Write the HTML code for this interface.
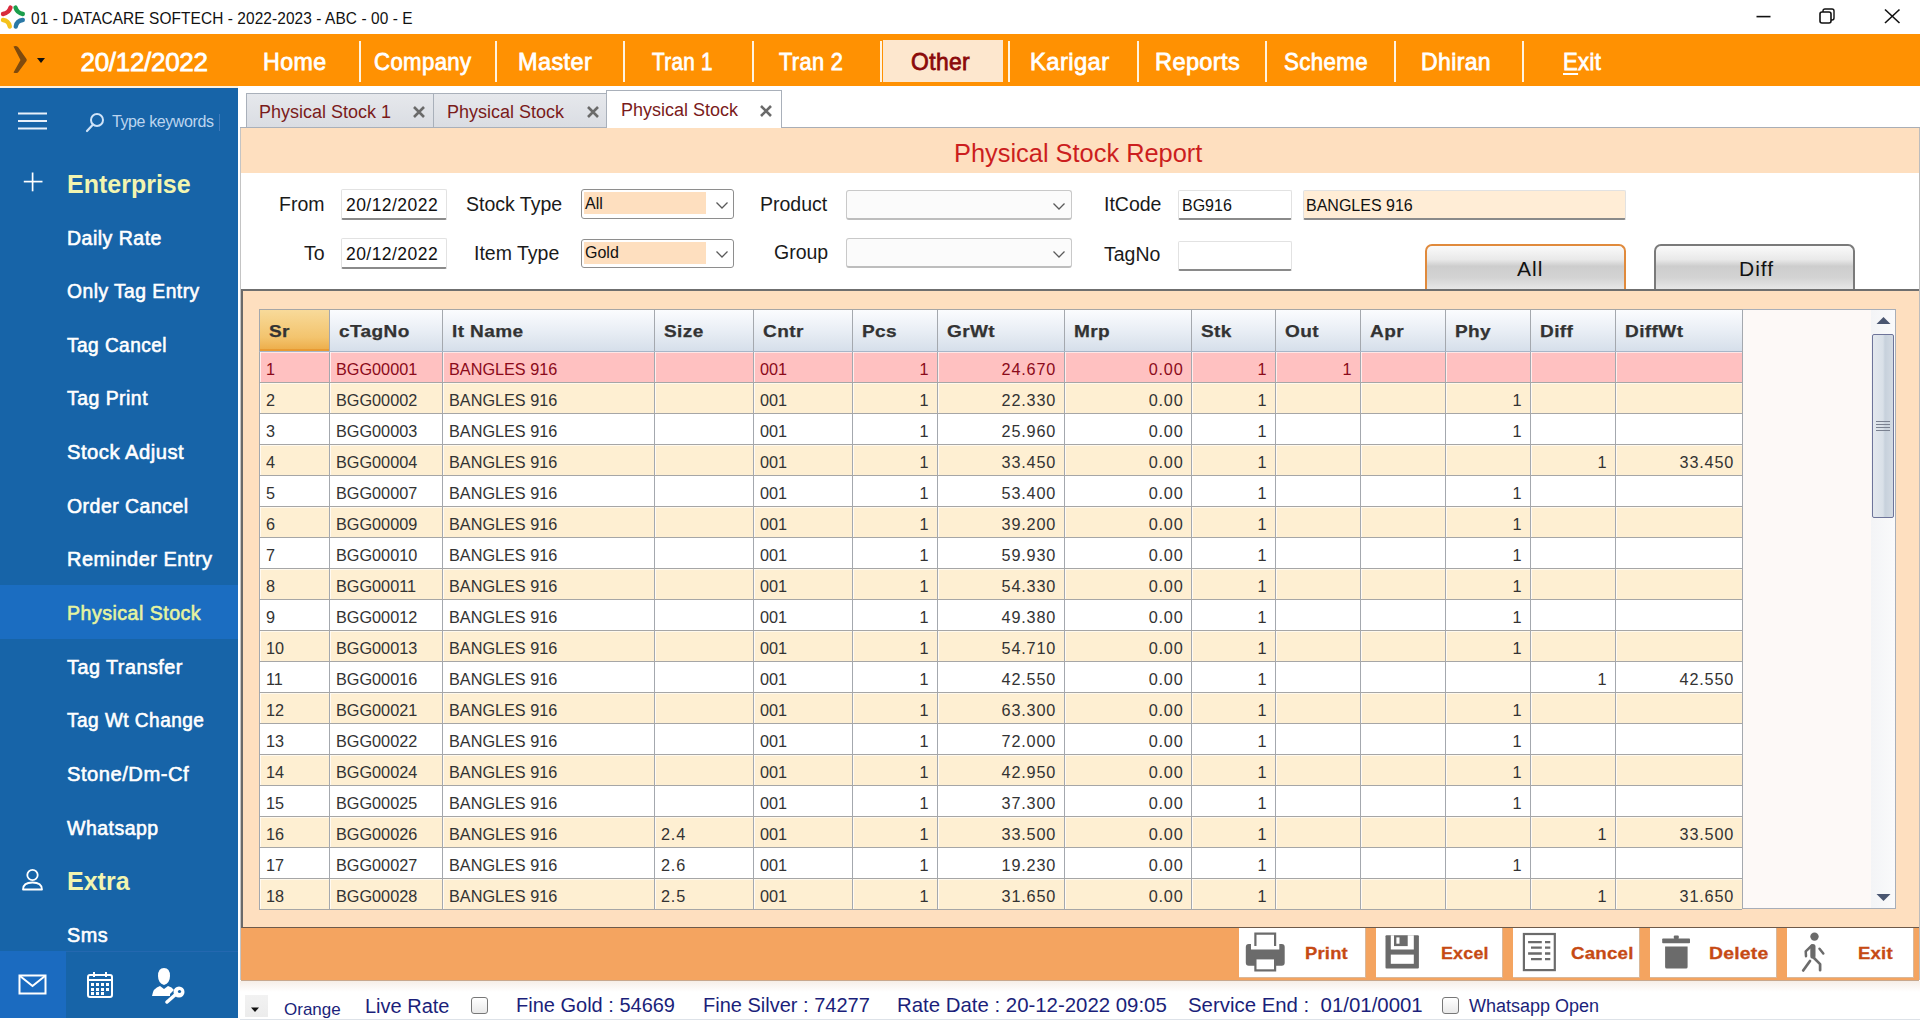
<!DOCTYPE html>
<html><head><meta charset="utf-8">
<style>
*{margin:0;padding:0;box-sizing:border-box}
html,body{width:1920px;height:1020px;overflow:hidden;background:#fff;font-family:"Liberation Sans",sans-serif}
.a{position:absolute}
/* title bar */
#title{position:absolute;left:31px;top:9px;font-size:17px;letter-spacing:0.1px;transform:scaleX(0.907);transform-origin:0 0;color:#111;white-space:nowrap}
/* menu */
#menubar{position:absolute;left:0;top:34px;width:1920px;height:52px;background:#FF9102}
.mi{position:absolute;top:52px;font-weight:normal;-webkit-text-stroke:0.8px currentColor;font-size:24px;letter-spacing:0.4px;transform-origin:0 0;color:#fff;line-height:20px;white-space:nowrap}
.mi u{text-decoration:underline;text-underline-offset:3px;text-decoration-thickness:2px}
.msel{color:#8B0A0A}
#oth{position:absolute;left:883px;top:40px;width:120px;height:42px;background:#FDE7CE}
.msep{position:absolute;top:41px;width:2px;height:41px;background:#FFF3E0}
#mdate{position:absolute;left:80.5px;top:52px;font-size:26px;font-weight:normal;-webkit-text-stroke:0.8px #fff;color:#fff;letter-spacing:-0.3px;line-height:20px}
/* sidebar */
#side{position:absolute;left:0;top:88px;width:238px;height:930px;background:#1764A8}
.si{position:absolute;left:0;width:238px;height:53.5px}
.si span{position:absolute;left:67px;top:21px;transform-origin:0 0;font-weight:normal;-webkit-text-stroke:0.6px currentColor;font-size:20px;letter-spacing:0.5px;color:#fff;line-height:14px;white-space:nowrap}
.si.sel{background:#1B6DC1}
.si.sel span{color:#E6F3A0}
.sh{position:absolute;left:67px;font-weight:bold;font-size:25px;color:#F2F5B0;line-height:18px;white-space:nowrap}
/* tabs */
.tab{position:absolute;top:93px;height:35px;border:1px solid #A9B0BA;background:linear-gradient(#E6E8EC,#DADDE3)}
.tab span{position:absolute;top:9px;font-size:18px;color:#7A1B1B;white-space:nowrap;line-height:18px}
.tab i{position:absolute;top:10px;font-style:normal}
.tab.act{top:90px;height:38px;background:#fff;border-bottom:none}
/* content */
#content{position:absolute;left:240px;top:128px;width:1680px;height:852px;background:#FEDFBF;border-left:1px solid #C4C4C4;border-right:1px solid #BDBDBD}
#panel{position:absolute;left:241px;top:289px;width:1678px;height:639px;border-left:2px solid #6a6a6a;border-top:2px solid #6f6f6f;border-bottom:1px solid #6f5a4a}
#rtitle{position:absolute;left:954px;top:141px;font-size:25.4px;color:#CC1E1E;line-height:24px;white-space:nowrap}
#form{position:absolute;left:241px;top:173px;width:1678px;height:117px;background:#fff}
.lbl{position:absolute;font-size:19.5px;color:#1a1a1a;white-space:nowrap;line-height:16px}
.inp{position:absolute;background:#fff;border:1px solid #E2E2E2;border-bottom:2px solid #8a8a8a;border-radius:2px}
.inp span{position:absolute;left:4px;top:8px;font-size:16px;color:#111;white-space:nowrap;line-height:14px}
.cmb{position:absolute;background:#fff;border:1.5px solid #8E8E8E;border-radius:3px}
.cmb2{position:absolute;background:#FBFBFB;border:1px solid #C9C9C9;border-bottom:2px solid #BDBDBD;border-radius:3px}
.chev{position:absolute;width:8px;height:8px;border-right:1.5px solid #555;border-bottom:1.5px solid #555;transform:rotate(45deg)}
.btn{position:absolute;top:244px;height:47px;border-radius:7px 7px 0 0;background:linear-gradient(#FAFAFA 0%,#E9E9E9 30%,#CDCDCD 45%,#D3D3D3 70%,#EAEAEA 100%)}
.btn span{position:absolute;top:16px;font-size:21px;color:#111;line-height:16px}
#panelline{position:absolute;left:242px;top:289px;width:1676px;height:2px;background:#6f6f6f}
/* grid */
#grid{position:absolute;left:259px;top:309px;width:1637px;height:600px;background:#FDF9F7;border:1px solid #A8AEB8;border-left:none}
.hd{position:absolute;top:310px;height:41px;background:linear-gradient(#FBFCFE,#E9EEF5 50%,#D6DFEA)}
.hd span{position:absolute;left:9px;top:16px;font-weight:bold;-webkit-text-stroke:0.25px #333;font-size:17px;letter-spacing:0.35px;transform:scaleX(1.12);transform-origin:0 0;color:#333;line-height:12px;white-space:nowrap}
.hd.sr{background:linear-gradient(#F8DA9A,#F3C46E 70%,#EDAF4C);border-bottom:2px solid #E89A32}
.row{position:absolute;left:259px;width:1483px;height:31px}
.r1{background:#FFC1C1;color:#8B0A1A}
.ra{background:#FEEFD2;color:#333}
.rb{background:#fff;color:#333}
.c{position:absolute;top:5px;height:26px;padding:0 9px 0 6px;font-size:17px;line-height:28px;white-space:nowrap}
.dec{letter-spacing:0.85px;padding-right:8px}
.c span{display:inline-block;transform:scaleX(0.955);transform-origin:0 50%}
.c.ar span{transform-origin:100% 50%}
.ar{text-align:right}
.vl{position:absolute;top:309px;width:1px;height:600px;background:#A4A8AE}
.hl{position:absolute;left:259px;width:1483px;height:1px;background:#A6A6A6}
/* scrollbar */
#sbar{position:absolute;left:1871px;top:310px;width:24px;height:598px;background:linear-gradient(90deg,#F3F4F6,#FAFAFB)}
#sthumb{position:absolute;left:1872px;top:334px;width:22px;height:184px;border:1.5px solid #6E7499;border-radius:2px;background:linear-gradient(90deg,#E3E8EE,#D9E0E8 50%,#C7D1DC 60%,#D3DAE3)}
/* bottom bar */
#bbar{position:absolute;left:241px;top:928px;width:1678px;height:53px;background:#F4A460;border-bottom:1px solid #C8A88E}
.bb{position:absolute;top:928px;height:50px;background:#fff;border-right:1px solid #d9b89a;border-bottom:1px solid #d9b89a}
.bb span{position:absolute;top:19px;font-weight:bold;font-size:17px;letter-spacing:0.2px;-webkit-text-stroke:0.3px currentColor;transform-origin:0 0;color:#C64A14;line-height:13px;white-space:nowrap}
/* status */
#status{position:absolute;left:240px;top:981px;width:1680px;height:39px;background:linear-gradient(#F6EEE8,#FFFFFF 28%)}
.st{position:absolute;font-size:20px;color:#1B1F7A;white-space:nowrap;line-height:15px}
.cb{position:absolute;width:17px;height:17px;border:1.5px solid #777;border-radius:3px;background:linear-gradient(#fff,#e9e9e9)}
</style></head><body>

<!-- title bar -->
<svg class="a" style="left:0;top:0" width="28" height="32" viewBox="0 0 28 32">
  <path d="M3 14 Q9 13 10.5 7.5" stroke="#D92B3C" stroke-width="4.4" fill="none" stroke-linecap="round"/>
  <path d="M15.5 7.5 Q17 13 22.8 14" stroke="#1C9E4C" stroke-width="4.4" fill="none" stroke-linecap="round"/>
  <path d="M3 20 Q8.5 20.5 9.8 26.5" stroke="#F4C21C" stroke-width="4.4" fill="none" stroke-linecap="round"/>
  <path d="M15.8 26.5 Q16.8 20.5 22.8 20" stroke="#2A78A6" stroke-width="4.4" fill="none" stroke-linecap="round"/>
</svg>
<div id="title">01 - DATACARE SOFTECH - 2022-2023 - ABC - 00 - E</div>
<svg class="a" style="left:1750px;top:8px" width="160" height="20" viewBox="0 0 160 20">
  <line x1="6.5" y1="8.6" x2="20.5" y2="8.6" stroke="#111" stroke-width="1.6"/>
  <rect x="70" y="4" width="11" height="11" rx="2" stroke="#111" stroke-width="1.6" fill="none"/>
  <path d="M73 4 V3 Q73 1 75 1 H82 Q84 1 84 3 V10 Q84 12 82 12 H81" stroke="#111" stroke-width="1.4" fill="none"/>
  <line x1="135" y1="1.5" x2="149.5" y2="15" stroke="#111" stroke-width="1.6"/>
  <line x1="149.5" y1="1.5" x2="135" y2="15" stroke="#111" stroke-width="1.6"/>
</svg>

<!-- menu bar -->
<div id="menubar"></div>
<div class="a" style="left:0;top:86px;width:238px;height:2px;background:#FDF1DF"></div>
<svg class="a" style="left:10px;top:44px" width="40" height="34" viewBox="0 0 40 34">
  <path d="M3.5 2.5 Q6 1.5 8 3 L16.5 15 Q17 16 16.5 17 L8 28.5 Q6 29.5 3.5 28.5 L10.5 16 Z" fill="#7E4A0E"/>
  <path d="M27 14 L35 14 L31 19 Z" fill="#111"/>
</svg>
<div id="mdate">20/12/2022</div>
<div id="oth"></div>
<div class="msep" style="left:359px"></div>
<div class="msep" style="left:495px"></div>
<div class="msep" style="left:623px"></div>
<div class="msep" style="left:752px"></div>
<div class="msep" style="left:880px"></div>
<div class="msep" style="left:1008px"></div>
<div class="msep" style="left:1137px"></div>
<div class="msep" style="left:1265px"></div>
<div class="msep" style="left:1394px"></div>
<div class="msep" style="left:1522px"></div>
<div class="mi" style="left:263px;transform:scaleX(0.967)">Home</div>
<div class="mi" style="left:374px;transform:scaleX(0.924)">Company</div>
<div class="mi" style="left:518px;transform:scaleX(0.979)">Master</div>
<div class="mi" style="left:652px;transform:scaleX(0.859)">Tran 1</div>
<div class="mi" style="left:779px;transform:scaleX(0.908)">Tran 2</div>
<div class="mi msel" style="left:911px;transform:scaleX(0.952)">Other</div>
<div class="mi" style="left:1030px;transform:scaleX(0.991)">Karigar</div>
<div class="mi" style="left:1155px;transform:scaleX(0.981)">Reports</div>
<div class="mi" style="left:1284px;transform:scaleX(0.928)">Scheme</div>
<div class="mi" style="left:1421px;transform:scaleX(0.958)">Dhiran</div>
<div class="mi" style="left:1563px;transform:scaleX(0.919)"><u>E</u>xit</div>

<!-- sidebar -->
<div id="side"></div>
<svg class="a" style="left:16px;top:111px" width="34" height="20" viewBox="0 0 34 20">
  <line x1="2" y1="2.5" x2="31" y2="2.5" stroke="#E8F0FA" stroke-width="2"/>
  <line x1="2" y1="10" x2="31" y2="10" stroke="#E8F0FA" stroke-width="2"/>
  <line x1="2" y1="17.5" x2="31" y2="17.5" stroke="#E8F0FA" stroke-width="2"/>
</svg>
<svg class="a" style="left:84px;top:110px" width="22" height="24" viewBox="0 0 22 24">
  <circle cx="13" cy="10" r="6" stroke="#CFE3F8" stroke-width="2" fill="none"/>
  <line x1="9" y1="14.5" x2="3" y2="21" stroke="#CFE3F8" stroke-width="2.2" stroke-linecap="round"/>
</svg>
<div class="a" style="left:112px;top:115px;font-size:16px;color:#BCD5EF;letter-spacing:-0.4px;line-height:14px;white-space:nowrap">Type keywords</div>
<div class="a" style="left:219px;top:114px;width:1px;height:17px;background:#3f7bbd"></div>
<svg class="a" style="left:23px;top:172px" width="20" height="20" viewBox="0 0 20 20">
  <line x1="9.6" y1="0.5" x2="9.6" y2="19.3" stroke="#fff" stroke-width="1.7"/>
  <line x1="0.8" y1="9.6" x2="19.5" y2="9.6" stroke="#fff" stroke-width="1.7"/>
</svg>
<div class="sh" style="top:175px">Enterprise</div>
<div class="si" style="top:209.5px"><span style="transform:scaleX(0.976)">Daily Rate</span></div>
<div class="si" style="top:263px"><span style="transform:scaleX(0.963)">Only Tag Entry</span></div>
<div class="si" style="top:316.5px"><span style="transform:scaleX(0.952)">Tag Cancel</span></div>
<div class="si" style="top:370px"><span style="transform:scaleX(0.971)">Tag Print</span></div>
<div class="si" style="top:424px"><span style="transform:scaleX(1.009)">Stock Adjust</span></div>
<div class="si" style="top:477.5px"><span style="transform:scaleX(0.973)">Order Cancel</span></div>
<div class="si" style="top:531px"><span style="transform:scaleX(0.997)">Reminder Entry</span></div>
<div class="si sel" style="top:585px"><span style="transform:scaleX(0.978)">Physical Stock</span></div>
<div class="si" style="top:638.5px"><span style="transform:scaleX(0.989)">Tag Transfer</span></div>
<div class="si" style="top:692px"><span style="transform:scaleX(0.952)">Tag Wt Change</span></div>
<div class="si" style="top:746px"><span style="transform:scaleX(1.009)">Stone/Dm-Cf</span></div>
<div class="si" style="top:799.5px"><span style="transform:scaleX(0.975)">Whatsapp</span></div>
<div class="si" style="top:907px"><span style="transform:scaleX(0.99)">Sms</span></div>
<svg class="a" style="left:20px;top:868px" width="26" height="24" viewBox="0 0 26 24">
  <circle cx="12.5" cy="7" r="5.2" stroke="#fff" stroke-width="1.8" fill="none"/>
  <path d="M3 21.5 Q3 14.5 12.5 14.5 Q22 14.5 22 21.5 Z" stroke="#fff" stroke-width="1.8" fill="none" stroke-linejoin="round"/>
</svg>
<div class="sh" style="top:872px">Extra</div>
<div class="a" style="left:0;top:951px;width:238px;height:67px;background:#1764A8;border-top:1px solid #2468B0"></div>
<div class="a" style="left:0;top:951px;width:66px;height:67px;background:#1B6BC0"></div>
<svg class="a" style="left:18px;top:974px" width="30" height="22" viewBox="0 0 30 22">
  <rect x="1.5" y="1.5" width="26" height="18" stroke="#fff" stroke-width="2" fill="none"/>
  <path d="M2 2 L14.5 12 L27 2" stroke="#fff" stroke-width="2" fill="none"/>
</svg>
<svg class="a" style="left:86px;top:971px" width="28" height="28" viewBox="0 0 28 28">
  <rect x="2" y="4" width="24" height="22" rx="2" stroke="#fff" stroke-width="2" fill="none"/>
  <line x1="2" y1="9" x2="26" y2="9" stroke="#fff" stroke-width="2"/>
  <line x1="8" y1="1" x2="8" y2="6" stroke="#fff" stroke-width="2"/>
  <line x1="20" y1="1" x2="20" y2="6" stroke="#fff" stroke-width="2"/>
  <g fill="#fff">
   <rect x="5" y="12" width="3" height="3"/><rect x="10" y="12" width="3" height="3"/><rect x="15" y="12" width="3" height="3"/><rect x="20" y="12" width="3" height="3"/>
   <rect x="5" y="17" width="3" height="3"/><rect x="10" y="17" width="3" height="3"/><rect x="15" y="17" width="3" height="3"/><rect x="20" y="17" width="3" height="3"/>
   <rect x="5" y="21" width="3" height="3"/><rect x="10" y="21" width="3" height="3"/><rect x="15" y="21" width="3" height="3"/>
  </g>
</svg>
<svg class="a" style="left:150px;top:966px" width="38" height="38" viewBox="0 0 38 38">
  <path d="M14 2 Q8 2 8 10 Q8 17 14 19 Q20 17 20 10 Q20 2 14 2 Z" fill="#fff"/>
  <path d="M2 30 Q3 22 10 20 L14 23 L18 20 Q22 21 24 24 L20 28 L20 30 Z" fill="#fff"/>
  <circle cx="29" cy="26" r="5.5" fill="#fff"/>
  <circle cx="29.5" cy="25.5" r="1.6" fill="#1764A8"/>
  <path d="M25 29 L17 36" stroke="#fff" stroke-width="3.5" stroke-linecap="round"/>
</svg>

<!-- content -->
<div id="content"></div>
<div class="a" style="left:240px;top:127px;width:367px;height:1px;background:#A9AEB6"></div><div class="a" style="left:781px;top:127px;width:1139px;height:1px;background:#A9AEB6"></div>
<!-- tabs -->
<div class="tab" style="left:246px;width:188px"><span style="left:12px">Physical Stock 1</span><i style="left:165px"><svg width="14" height="12" viewBox="0 0 14 12"><path d="M2 1 L12 11 M12 1 L2 11" stroke="#6a6a6a" stroke-width="2.6"/></svg></i></div>
<div class="tab" style="left:433px;width:174px"><span style="left:13px">Physical Stock</span><i style="left:152px"><svg width="14" height="12" viewBox="0 0 14 12"><path d="M2 1 L12 11 M12 1 L2 11" stroke="#6a6a6a" stroke-width="2.6"/></svg></i></div>
<div class="tab act" style="left:606px;width:176px"><span style="left:14px;top:10px">Physical Stock</span><i style="left:152px;top:12px"><svg width="14" height="12" viewBox="0 0 14 12"><path d="M2 1 L12 11 M12 1 L2 11" stroke="#6a6a6a" stroke-width="2.6"/></svg></i></div>

<div id="rtitle">Physical Stock Report</div>
<div id="form"></div>

<div class="lbl" style="left:279px;top:196px">From</div>
<div class="lbl" style="left:304px;top:245px">To</div>
<div class="inp" style="left:341px;top:189px;width:106px;height:31px"><span style="letter-spacing:0.45px;font-size:17.5px;top:8px">20/12/2022</span></div>
<div class="inp" style="left:341px;top:238px;width:106px;height:31px"><span style="letter-spacing:0.45px;font-size:17.5px;top:8px">20/12/2022</span></div>

<div class="lbl" style="left:466px;top:196px">Stock Type</div>
<div class="lbl" style="left:474px;top:245px">Item Type</div>
<div class="cmb" style="left:581px;top:189px;width:153px;height:30px"><div class="a" style="left:2px;top:2px;width:122px;height:22px;background:#FEDFBF"></div><span class="a" style="left:3px;top:7px;font-size:16px;line-height:13px;color:#111">All</span></div>
<div class="cmb" style="left:581px;top:239px;width:153px;height:29px"><div class="a" style="left:2px;top:2px;width:122px;height:22px;background:#FEDFBF"></div><span class="a" style="left:3px;top:6px;font-size:16px;line-height:13px;color:#111">Gold</span></div>

<div class="lbl" style="left:760px;top:196px">Product</div>
<div class="lbl" style="left:774px;top:244px">Group</div>
<div class="cmb2" style="left:846px;top:190px;width:226px;height:30px"></div>
<div class="cmb2" style="left:846px;top:238px;width:226px;height:30px"></div>

<svg class="a" style="left:714.5px;top:200.5px" width="14" height="9" viewBox="0 0 14 9"><path d="M1.5 1.5 L7 7 L12.5 1.5" stroke="#5a5a5a" stroke-width="1.3" fill="none"/></svg>
<svg class="a" style="left:714.5px;top:249.5px" width="14" height="9" viewBox="0 0 14 9"><path d="M1.5 1.5 L7 7 L12.5 1.5" stroke="#5a5a5a" stroke-width="1.3" fill="none"/></svg>
<svg class="a" style="left:1052px;top:202px" width="14" height="9" viewBox="0 0 14 9"><path d="M1.5 1.5 L7 7 L12.5 1.5" stroke="#5a5a5a" stroke-width="1.3" fill="none"/></svg>
<svg class="a" style="left:1052px;top:249.5px" width="14" height="9" viewBox="0 0 14 9"><path d="M1.5 1.5 L7 7 L12.5 1.5" stroke="#5a5a5a" stroke-width="1.3" fill="none"/></svg>
<div class="lbl" style="left:1104px;top:196px">ItCode</div>
<div class="lbl" style="left:1104px;top:246px">TagNo</div>
<div class="inp" style="left:1178px;top:190px;width:114px;height:30px"><span style="top:8px;left:3px">BG916</span></div>
<div class="inp" style="left:1178px;top:241px;width:114px;height:30px"></div>
<div class="inp" style="left:1303px;top:190px;width:323px;height:30px;background:#FFEDD6"><span style="top:8px;left:2px">BANGLES 916</span></div>

<div class="btn" style="left:1425px;width:201px;border:2px solid #E08A3C;border-bottom:none"><span style="left:90px;top:15px;letter-spacing:1px">All</span></div>
<div class="btn" style="left:1654px;width:201px;border:2px solid #7a7a7a;border-bottom:none"><span style="left:83px;top:15px;letter-spacing:1px">Diff</span></div>
<div id="panel"></div>

<!-- grid -->
<div id="grid"></div>
<div class="hd sr" style="left:260px;width:69px"><span>Sr</span></div>
<div class="hd" style="left:330px;width:112px"><span>cTagNo</span></div>
<div class="hd" style="left:443px;width:211px"><span>It Name</span></div>
<div class="hd" style="left:655px;width:98px"><span>Size</span></div>
<div class="hd" style="left:754px;width:98px"><span>Cntr</span></div>
<div class="hd" style="left:853px;width:84px"><span>Pcs</span></div>
<div class="hd" style="left:938px;width:126px"><span>GrWt</span></div>
<div class="hd" style="left:1065px;width:126px"><span>Mrp</span></div>
<div class="hd" style="left:1192px;width:83px"><span>Stk</span></div>
<div class="hd" style="left:1276px;width:84px"><span>Out</span></div>
<div class="hd" style="left:1361px;width:84px"><span>Apr</span></div>
<div class="hd" style="left:1446px;width:84px"><span>Phy</span></div>
<div class="hd" style="left:1531px;width:84px"><span>Diff</span></div>
<div class="hd" style="left:1616px;width:126px"><span>DiffWt</span></div>
<div class="row r1" style="top:351px">
<div class="c" style="left:1px;width:69px"><span>1</span></div>
<div class="c" style="left:71px;width:112px"><span>BGG00001</span></div>
<div class="c" style="left:184px;width:211px"><span>BANGLES 916</span></div>
<div class="c" style="left:396px;width:98px"></div>
<div class="c" style="left:495px;width:98px"><span>001</span></div>
<div class="c ar" style="left:594px;width:84px"><span>1</span></div>
<div class="c ar dec" style="left:679px;width:126px"><span>24.670</span></div>
<div class="c ar dec" style="left:806px;width:126px"><span>0.00</span></div>
<div class="c ar" style="left:933px;width:83px"><span>1</span></div>
<div class="c ar" style="left:1017px;width:84px"><span>1</span></div>
<div class="c ar" style="left:1102px;width:84px"></div>
<div class="c ar" style="left:1187px;width:84px"></div>
<div class="c ar" style="left:1272px;width:84px"></div>
<div class="c ar" style="left:1357px;width:126px"></div>
</div>
<div class="row ra" style="top:382px">
<div class="c" style="left:1px;width:69px"><span>2</span></div>
<div class="c" style="left:71px;width:112px"><span>BGG00002</span></div>
<div class="c" style="left:184px;width:211px"><span>BANGLES 916</span></div>
<div class="c" style="left:396px;width:98px"></div>
<div class="c" style="left:495px;width:98px"><span>001</span></div>
<div class="c ar" style="left:594px;width:84px"><span>1</span></div>
<div class="c ar dec" style="left:679px;width:126px"><span>22.330</span></div>
<div class="c ar dec" style="left:806px;width:126px"><span>0.00</span></div>
<div class="c ar" style="left:933px;width:83px"><span>1</span></div>
<div class="c ar" style="left:1017px;width:84px"></div>
<div class="c ar" style="left:1102px;width:84px"></div>
<div class="c ar" style="left:1187px;width:84px"><span>1</span></div>
<div class="c ar" style="left:1272px;width:84px"></div>
<div class="c ar" style="left:1357px;width:126px"></div>
</div>
<div class="row rb" style="top:413px">
<div class="c" style="left:1px;width:69px"><span>3</span></div>
<div class="c" style="left:71px;width:112px"><span>BGG00003</span></div>
<div class="c" style="left:184px;width:211px"><span>BANGLES 916</span></div>
<div class="c" style="left:396px;width:98px"></div>
<div class="c" style="left:495px;width:98px"><span>001</span></div>
<div class="c ar" style="left:594px;width:84px"><span>1</span></div>
<div class="c ar dec" style="left:679px;width:126px"><span>25.960</span></div>
<div class="c ar dec" style="left:806px;width:126px"><span>0.00</span></div>
<div class="c ar" style="left:933px;width:83px"><span>1</span></div>
<div class="c ar" style="left:1017px;width:84px"></div>
<div class="c ar" style="left:1102px;width:84px"></div>
<div class="c ar" style="left:1187px;width:84px"><span>1</span></div>
<div class="c ar" style="left:1272px;width:84px"></div>
<div class="c ar" style="left:1357px;width:126px"></div>
</div>
<div class="row ra" style="top:444px">
<div class="c" style="left:1px;width:69px"><span>4</span></div>
<div class="c" style="left:71px;width:112px"><span>BGG00004</span></div>
<div class="c" style="left:184px;width:211px"><span>BANGLES 916</span></div>
<div class="c" style="left:396px;width:98px"></div>
<div class="c" style="left:495px;width:98px"><span>001</span></div>
<div class="c ar" style="left:594px;width:84px"><span>1</span></div>
<div class="c ar dec" style="left:679px;width:126px"><span>33.450</span></div>
<div class="c ar dec" style="left:806px;width:126px"><span>0.00</span></div>
<div class="c ar" style="left:933px;width:83px"><span>1</span></div>
<div class="c ar" style="left:1017px;width:84px"></div>
<div class="c ar" style="left:1102px;width:84px"></div>
<div class="c ar" style="left:1187px;width:84px"></div>
<div class="c ar" style="left:1272px;width:84px"><span>1</span></div>
<div class="c ar dec" style="left:1357px;width:126px"><span>33.450</span></div>
</div>
<div class="row rb" style="top:475px">
<div class="c" style="left:1px;width:69px"><span>5</span></div>
<div class="c" style="left:71px;width:112px"><span>BGG00007</span></div>
<div class="c" style="left:184px;width:211px"><span>BANGLES 916</span></div>
<div class="c" style="left:396px;width:98px"></div>
<div class="c" style="left:495px;width:98px"><span>001</span></div>
<div class="c ar" style="left:594px;width:84px"><span>1</span></div>
<div class="c ar dec" style="left:679px;width:126px"><span>53.400</span></div>
<div class="c ar dec" style="left:806px;width:126px"><span>0.00</span></div>
<div class="c ar" style="left:933px;width:83px"><span>1</span></div>
<div class="c ar" style="left:1017px;width:84px"></div>
<div class="c ar" style="left:1102px;width:84px"></div>
<div class="c ar" style="left:1187px;width:84px"><span>1</span></div>
<div class="c ar" style="left:1272px;width:84px"></div>
<div class="c ar" style="left:1357px;width:126px"></div>
</div>
<div class="row ra" style="top:506px">
<div class="c" style="left:1px;width:69px"><span>6</span></div>
<div class="c" style="left:71px;width:112px"><span>BGG00009</span></div>
<div class="c" style="left:184px;width:211px"><span>BANGLES 916</span></div>
<div class="c" style="left:396px;width:98px"></div>
<div class="c" style="left:495px;width:98px"><span>001</span></div>
<div class="c ar" style="left:594px;width:84px"><span>1</span></div>
<div class="c ar dec" style="left:679px;width:126px"><span>39.200</span></div>
<div class="c ar dec" style="left:806px;width:126px"><span>0.00</span></div>
<div class="c ar" style="left:933px;width:83px"><span>1</span></div>
<div class="c ar" style="left:1017px;width:84px"></div>
<div class="c ar" style="left:1102px;width:84px"></div>
<div class="c ar" style="left:1187px;width:84px"><span>1</span></div>
<div class="c ar" style="left:1272px;width:84px"></div>
<div class="c ar" style="left:1357px;width:126px"></div>
</div>
<div class="row rb" style="top:537px">
<div class="c" style="left:1px;width:69px"><span>7</span></div>
<div class="c" style="left:71px;width:112px"><span>BGG00010</span></div>
<div class="c" style="left:184px;width:211px"><span>BANGLES 916</span></div>
<div class="c" style="left:396px;width:98px"></div>
<div class="c" style="left:495px;width:98px"><span>001</span></div>
<div class="c ar" style="left:594px;width:84px"><span>1</span></div>
<div class="c ar dec" style="left:679px;width:126px"><span>59.930</span></div>
<div class="c ar dec" style="left:806px;width:126px"><span>0.00</span></div>
<div class="c ar" style="left:933px;width:83px"><span>1</span></div>
<div class="c ar" style="left:1017px;width:84px"></div>
<div class="c ar" style="left:1102px;width:84px"></div>
<div class="c ar" style="left:1187px;width:84px"><span>1</span></div>
<div class="c ar" style="left:1272px;width:84px"></div>
<div class="c ar" style="left:1357px;width:126px"></div>
</div>
<div class="row ra" style="top:568px">
<div class="c" style="left:1px;width:69px"><span>8</span></div>
<div class="c" style="left:71px;width:112px"><span>BGG00011</span></div>
<div class="c" style="left:184px;width:211px"><span>BANGLES 916</span></div>
<div class="c" style="left:396px;width:98px"></div>
<div class="c" style="left:495px;width:98px"><span>001</span></div>
<div class="c ar" style="left:594px;width:84px"><span>1</span></div>
<div class="c ar dec" style="left:679px;width:126px"><span>54.330</span></div>
<div class="c ar dec" style="left:806px;width:126px"><span>0.00</span></div>
<div class="c ar" style="left:933px;width:83px"><span>1</span></div>
<div class="c ar" style="left:1017px;width:84px"></div>
<div class="c ar" style="left:1102px;width:84px"></div>
<div class="c ar" style="left:1187px;width:84px"><span>1</span></div>
<div class="c ar" style="left:1272px;width:84px"></div>
<div class="c ar" style="left:1357px;width:126px"></div>
</div>
<div class="row rb" style="top:599px">
<div class="c" style="left:1px;width:69px"><span>9</span></div>
<div class="c" style="left:71px;width:112px"><span>BGG00012</span></div>
<div class="c" style="left:184px;width:211px"><span>BANGLES 916</span></div>
<div class="c" style="left:396px;width:98px"></div>
<div class="c" style="left:495px;width:98px"><span>001</span></div>
<div class="c ar" style="left:594px;width:84px"><span>1</span></div>
<div class="c ar dec" style="left:679px;width:126px"><span>49.380</span></div>
<div class="c ar dec" style="left:806px;width:126px"><span>0.00</span></div>
<div class="c ar" style="left:933px;width:83px"><span>1</span></div>
<div class="c ar" style="left:1017px;width:84px"></div>
<div class="c ar" style="left:1102px;width:84px"></div>
<div class="c ar" style="left:1187px;width:84px"><span>1</span></div>
<div class="c ar" style="left:1272px;width:84px"></div>
<div class="c ar" style="left:1357px;width:126px"></div>
</div>
<div class="row ra" style="top:630px">
<div class="c" style="left:1px;width:69px"><span>10</span></div>
<div class="c" style="left:71px;width:112px"><span>BGG00013</span></div>
<div class="c" style="left:184px;width:211px"><span>BANGLES 916</span></div>
<div class="c" style="left:396px;width:98px"></div>
<div class="c" style="left:495px;width:98px"><span>001</span></div>
<div class="c ar" style="left:594px;width:84px"><span>1</span></div>
<div class="c ar dec" style="left:679px;width:126px"><span>54.710</span></div>
<div class="c ar dec" style="left:806px;width:126px"><span>0.00</span></div>
<div class="c ar" style="left:933px;width:83px"><span>1</span></div>
<div class="c ar" style="left:1017px;width:84px"></div>
<div class="c ar" style="left:1102px;width:84px"></div>
<div class="c ar" style="left:1187px;width:84px"><span>1</span></div>
<div class="c ar" style="left:1272px;width:84px"></div>
<div class="c ar" style="left:1357px;width:126px"></div>
</div>
<div class="row rb" style="top:661px">
<div class="c" style="left:1px;width:69px"><span>11</span></div>
<div class="c" style="left:71px;width:112px"><span>BGG00016</span></div>
<div class="c" style="left:184px;width:211px"><span>BANGLES 916</span></div>
<div class="c" style="left:396px;width:98px"></div>
<div class="c" style="left:495px;width:98px"><span>001</span></div>
<div class="c ar" style="left:594px;width:84px"><span>1</span></div>
<div class="c ar dec" style="left:679px;width:126px"><span>42.550</span></div>
<div class="c ar dec" style="left:806px;width:126px"><span>0.00</span></div>
<div class="c ar" style="left:933px;width:83px"><span>1</span></div>
<div class="c ar" style="left:1017px;width:84px"></div>
<div class="c ar" style="left:1102px;width:84px"></div>
<div class="c ar" style="left:1187px;width:84px"></div>
<div class="c ar" style="left:1272px;width:84px"><span>1</span></div>
<div class="c ar dec" style="left:1357px;width:126px"><span>42.550</span></div>
</div>
<div class="row ra" style="top:692px">
<div class="c" style="left:1px;width:69px"><span>12</span></div>
<div class="c" style="left:71px;width:112px"><span>BGG00021</span></div>
<div class="c" style="left:184px;width:211px"><span>BANGLES 916</span></div>
<div class="c" style="left:396px;width:98px"></div>
<div class="c" style="left:495px;width:98px"><span>001</span></div>
<div class="c ar" style="left:594px;width:84px"><span>1</span></div>
<div class="c ar dec" style="left:679px;width:126px"><span>63.300</span></div>
<div class="c ar dec" style="left:806px;width:126px"><span>0.00</span></div>
<div class="c ar" style="left:933px;width:83px"><span>1</span></div>
<div class="c ar" style="left:1017px;width:84px"></div>
<div class="c ar" style="left:1102px;width:84px"></div>
<div class="c ar" style="left:1187px;width:84px"><span>1</span></div>
<div class="c ar" style="left:1272px;width:84px"></div>
<div class="c ar" style="left:1357px;width:126px"></div>
</div>
<div class="row rb" style="top:723px">
<div class="c" style="left:1px;width:69px"><span>13</span></div>
<div class="c" style="left:71px;width:112px"><span>BGG00022</span></div>
<div class="c" style="left:184px;width:211px"><span>BANGLES 916</span></div>
<div class="c" style="left:396px;width:98px"></div>
<div class="c" style="left:495px;width:98px"><span>001</span></div>
<div class="c ar" style="left:594px;width:84px"><span>1</span></div>
<div class="c ar dec" style="left:679px;width:126px"><span>72.000</span></div>
<div class="c ar dec" style="left:806px;width:126px"><span>0.00</span></div>
<div class="c ar" style="left:933px;width:83px"><span>1</span></div>
<div class="c ar" style="left:1017px;width:84px"></div>
<div class="c ar" style="left:1102px;width:84px"></div>
<div class="c ar" style="left:1187px;width:84px"><span>1</span></div>
<div class="c ar" style="left:1272px;width:84px"></div>
<div class="c ar" style="left:1357px;width:126px"></div>
</div>
<div class="row ra" style="top:754px">
<div class="c" style="left:1px;width:69px"><span>14</span></div>
<div class="c" style="left:71px;width:112px"><span>BGG00024</span></div>
<div class="c" style="left:184px;width:211px"><span>BANGLES 916</span></div>
<div class="c" style="left:396px;width:98px"></div>
<div class="c" style="left:495px;width:98px"><span>001</span></div>
<div class="c ar" style="left:594px;width:84px"><span>1</span></div>
<div class="c ar dec" style="left:679px;width:126px"><span>42.950</span></div>
<div class="c ar dec" style="left:806px;width:126px"><span>0.00</span></div>
<div class="c ar" style="left:933px;width:83px"><span>1</span></div>
<div class="c ar" style="left:1017px;width:84px"></div>
<div class="c ar" style="left:1102px;width:84px"></div>
<div class="c ar" style="left:1187px;width:84px"><span>1</span></div>
<div class="c ar" style="left:1272px;width:84px"></div>
<div class="c ar" style="left:1357px;width:126px"></div>
</div>
<div class="row rb" style="top:785px">
<div class="c" style="left:1px;width:69px"><span>15</span></div>
<div class="c" style="left:71px;width:112px"><span>BGG00025</span></div>
<div class="c" style="left:184px;width:211px"><span>BANGLES 916</span></div>
<div class="c" style="left:396px;width:98px"></div>
<div class="c" style="left:495px;width:98px"><span>001</span></div>
<div class="c ar" style="left:594px;width:84px"><span>1</span></div>
<div class="c ar dec" style="left:679px;width:126px"><span>37.300</span></div>
<div class="c ar dec" style="left:806px;width:126px"><span>0.00</span></div>
<div class="c ar" style="left:933px;width:83px"><span>1</span></div>
<div class="c ar" style="left:1017px;width:84px"></div>
<div class="c ar" style="left:1102px;width:84px"></div>
<div class="c ar" style="left:1187px;width:84px"><span>1</span></div>
<div class="c ar" style="left:1272px;width:84px"></div>
<div class="c ar" style="left:1357px;width:126px"></div>
</div>
<div class="row ra" style="top:816px">
<div class="c" style="left:1px;width:69px"><span>16</span></div>
<div class="c" style="left:71px;width:112px"><span>BGG00026</span></div>
<div class="c" style="left:184px;width:211px"><span>BANGLES 916</span></div>
<div class="c dec" style="left:396px;width:98px"><span>2.4</span></div>
<div class="c" style="left:495px;width:98px"><span>001</span></div>
<div class="c ar" style="left:594px;width:84px"><span>1</span></div>
<div class="c ar dec" style="left:679px;width:126px"><span>33.500</span></div>
<div class="c ar dec" style="left:806px;width:126px"><span>0.00</span></div>
<div class="c ar" style="left:933px;width:83px"><span>1</span></div>
<div class="c ar" style="left:1017px;width:84px"></div>
<div class="c ar" style="left:1102px;width:84px"></div>
<div class="c ar" style="left:1187px;width:84px"></div>
<div class="c ar" style="left:1272px;width:84px"><span>1</span></div>
<div class="c ar dec" style="left:1357px;width:126px"><span>33.500</span></div>
</div>
<div class="row rb" style="top:847px">
<div class="c" style="left:1px;width:69px"><span>17</span></div>
<div class="c" style="left:71px;width:112px"><span>BGG00027</span></div>
<div class="c" style="left:184px;width:211px"><span>BANGLES 916</span></div>
<div class="c dec" style="left:396px;width:98px"><span>2.6</span></div>
<div class="c" style="left:495px;width:98px"><span>001</span></div>
<div class="c ar" style="left:594px;width:84px"><span>1</span></div>
<div class="c ar dec" style="left:679px;width:126px"><span>19.230</span></div>
<div class="c ar dec" style="left:806px;width:126px"><span>0.00</span></div>
<div class="c ar" style="left:933px;width:83px"><span>1</span></div>
<div class="c ar" style="left:1017px;width:84px"></div>
<div class="c ar" style="left:1102px;width:84px"></div>
<div class="c ar" style="left:1187px;width:84px"><span>1</span></div>
<div class="c ar" style="left:1272px;width:84px"></div>
<div class="c ar" style="left:1357px;width:126px"></div>
</div>
<div class="row ra" style="top:878px">
<div class="c" style="left:1px;width:69px"><span>18</span></div>
<div class="c" style="left:71px;width:112px"><span>BGG00028</span></div>
<div class="c" style="left:184px;width:211px"><span>BANGLES 916</span></div>
<div class="c dec" style="left:396px;width:98px"><span>2.5</span></div>
<div class="c" style="left:495px;width:98px"><span>001</span></div>
<div class="c ar" style="left:594px;width:84px"><span>1</span></div>
<div class="c ar dec" style="left:679px;width:126px"><span>31.650</span></div>
<div class="c ar dec" style="left:806px;width:126px"><span>0.00</span></div>
<div class="c ar" style="left:933px;width:83px"><span>1</span></div>
<div class="c ar" style="left:1017px;width:84px"></div>
<div class="c ar" style="left:1102px;width:84px"></div>
<div class="c ar" style="left:1187px;width:84px"></div>
<div class="c ar" style="left:1272px;width:84px"><span>1</span></div>
<div class="c ar dec" style="left:1357px;width:126px"><span>31.650</span></div>
</div>
<div class="a" style="left:260px;top:352px;width:1px;height:557px;background:rgba(255,255,255,0.7)"></div>
<div class="a" style="left:330px;top:352px;width:1px;height:557px;background:rgba(255,255,255,0.7)"></div>
<div class="a" style="left:443px;top:352px;width:1px;height:557px;background:rgba(255,255,255,0.7)"></div>
<div class="a" style="left:655px;top:352px;width:1px;height:557px;background:rgba(255,255,255,0.7)"></div>
<div class="a" style="left:754px;top:352px;width:1px;height:557px;background:rgba(255,255,255,0.7)"></div>
<div class="a" style="left:853px;top:352px;width:1px;height:557px;background:rgba(255,255,255,0.7)"></div>
<div class="a" style="left:938px;top:352px;width:1px;height:557px;background:rgba(255,255,255,0.7)"></div>
<div class="a" style="left:1065px;top:352px;width:1px;height:557px;background:rgba(255,255,255,0.7)"></div>
<div class="a" style="left:1192px;top:352px;width:1px;height:557px;background:rgba(255,255,255,0.7)"></div>
<div class="a" style="left:1276px;top:352px;width:1px;height:557px;background:rgba(255,255,255,0.7)"></div>
<div class="a" style="left:1361px;top:352px;width:1px;height:557px;background:rgba(255,255,255,0.7)"></div>
<div class="a" style="left:1446px;top:352px;width:1px;height:557px;background:rgba(255,255,255,0.7)"></div>
<div class="a" style="left:1531px;top:352px;width:1px;height:557px;background:rgba(255,255,255,0.7)"></div>
<div class="a" style="left:1616px;top:352px;width:1px;height:557px;background:rgba(255,255,255,0.7)"></div>
<div class="a" style="left:260px;top:352px;width:1482px;height:1px;background:rgba(255,255,255,0.6)"></div>
<div class="a" style="left:260px;top:383px;width:1482px;height:1px;background:rgba(255,255,255,0.6)"></div>
<div class="a" style="left:260px;top:414px;width:1482px;height:1px;background:rgba(255,255,255,0.6)"></div>
<div class="a" style="left:260px;top:445px;width:1482px;height:1px;background:rgba(255,255,255,0.6)"></div>
<div class="a" style="left:260px;top:476px;width:1482px;height:1px;background:rgba(255,255,255,0.6)"></div>
<div class="a" style="left:260px;top:507px;width:1482px;height:1px;background:rgba(255,255,255,0.6)"></div>
<div class="a" style="left:260px;top:538px;width:1482px;height:1px;background:rgba(255,255,255,0.6)"></div>
<div class="a" style="left:260px;top:569px;width:1482px;height:1px;background:rgba(255,255,255,0.6)"></div>
<div class="a" style="left:260px;top:600px;width:1482px;height:1px;background:rgba(255,255,255,0.6)"></div>
<div class="a" style="left:260px;top:631px;width:1482px;height:1px;background:rgba(255,255,255,0.6)"></div>
<div class="a" style="left:260px;top:662px;width:1482px;height:1px;background:rgba(255,255,255,0.6)"></div>
<div class="a" style="left:260px;top:693px;width:1482px;height:1px;background:rgba(255,255,255,0.6)"></div>
<div class="a" style="left:260px;top:724px;width:1482px;height:1px;background:rgba(255,255,255,0.6)"></div>
<div class="a" style="left:260px;top:755px;width:1482px;height:1px;background:rgba(255,255,255,0.6)"></div>
<div class="a" style="left:260px;top:786px;width:1482px;height:1px;background:rgba(255,255,255,0.6)"></div>
<div class="a" style="left:260px;top:817px;width:1482px;height:1px;background:rgba(255,255,255,0.6)"></div>
<div class="a" style="left:260px;top:848px;width:1482px;height:1px;background:rgba(255,255,255,0.6)"></div>
<div class="a" style="left:260px;top:879px;width:1482px;height:1px;background:rgba(255,255,255,0.6)"></div>
<div class="vl" style="left:259px"></div>
<div class="vl" style="left:329px"></div>
<div class="vl" style="left:442px"></div>
<div class="vl" style="left:654px"></div>
<div class="vl" style="left:753px"></div>
<div class="vl" style="left:852px"></div>
<div class="vl" style="left:937px"></div>
<div class="vl" style="left:1064px"></div>
<div class="vl" style="left:1191px"></div>
<div class="vl" style="left:1275px"></div>
<div class="vl" style="left:1360px"></div>
<div class="vl" style="left:1445px"></div>
<div class="vl" style="left:1530px"></div>
<div class="vl" style="left:1615px"></div>
<div class="vl" style="left:1742px"></div>
<div class="hl" style="top:309px"></div>
<div class="hl" style="top:351px;background:#A8B6C8"></div>
<div class="hl" style="top:382px"></div>
<div class="hl" style="top:413px"></div>
<div class="hl" style="top:444px"></div>
<div class="hl" style="top:475px"></div>
<div class="hl" style="top:506px"></div>
<div class="hl" style="top:537px"></div>
<div class="hl" style="top:568px"></div>
<div class="hl" style="top:599px"></div>
<div class="hl" style="top:630px"></div>
<div class="hl" style="top:661px"></div>
<div class="hl" style="top:692px"></div>
<div class="hl" style="top:723px"></div>
<div class="hl" style="top:754px"></div>
<div class="hl" style="top:785px"></div>
<div class="hl" style="top:816px"></div>
<div class="hl" style="top:847px"></div>
<div class="hl" style="top:878px"></div>
<div class="hl" style="top:909px"></div>
<div id="sbar"></div>
<svg class="a" style="left:1876px;top:316px" width="15" height="9" viewBox="0 0 15 9"><path d="M0.5 8 L7.5 1 L14.5 8 Z" fill="#4A5670"/></svg>
<div id="sthumb"></div>
<svg class="a" style="left:1876px;top:420px" width="14" height="12" viewBox="0 0 14 12"><path d="M0 1.5 H14 M0 4.5 H14 M0 7.5 H14 M0 10.5 H14" stroke="#7A8190" stroke-width="1"/></svg>
<svg class="a" style="left:1876px;top:893px" width="15" height="9" viewBox="0 0 15 9"><path d="M0.5 1 L7.5 8 L14.5 1 Z" fill="#4A5670"/></svg>

<!-- bottom bar -->
<div id="bbar"></div>
<div class="bb" style="left:1239px;width:127px"><span style="left:66px;transform:scaleX(1.08)">Print</span></div>
<div class="bb" style="left:1376px;width:127px"><span style="left:65px;transform:scaleX(1.05)">Excel</span></div>
<div class="bb" style="left:1513px;width:127px"><span style="left:58px;transform:scaleX(1.1)">Cancel</span></div>
<div class="bb" style="left:1650px;width:127px"><span style="left:59px;transform:scaleX(1.14)">Delete</span></div>
<div class="bb" style="left:1787px;width:127px"><span style="left:71px;transform:scaleX(1.09)">Exit</span></div>

<!-- icons -->
<svg class="a" style="left:1240px;top:926px" width="50" height="50" viewBox="0 0 50 50">
  <path d="M15.4 20 V7.7 H35.1 V20" stroke="#6B6B6B" stroke-width="2.2" fill="none"/>
  <path d="M5.8 21 Q5.8 18 8.8 18 H11 V23.5 H39.3 V18 H41.7 Q44.7 18 44.7 21 V36.7 Q44.7 39.7 41.7 39.7 H8.8 Q5.8 39.7 5.8 36.7 Z" fill="#6B6B6B"/>
  <rect x="15.4" y="32.3" width="19.7" height="12.1" stroke="#6B6B6B" stroke-width="2.2" fill="#fff"/>
</svg>
<svg class="a" style="left:1376px;top:926px" width="50" height="50" viewBox="0 0 50 50">
  <rect x="9.5" y="9.3" width="33.4" height="33.3" rx="1" fill="#6B6B6B"/>
  <rect x="14.8" y="9.3" width="23" height="14.2" fill="#fff"/>
  <rect x="14.8" y="28.6" width="23" height="9.2" fill="#fff"/>
  <rect x="18" y="9.3" width="13.7" height="10.8" fill="#6B6B6B"/>
  <rect x="20.4" y="11.4" width="3.1" height="6.3" fill="#fff"/>
</svg>
<svg class="a" style="left:1513px;top:926px" width="50" height="50" viewBox="0 0 50 50">
  <rect x="10.9" y="8" width="30.9" height="36.1" stroke="#6B6B6B" stroke-width="2.2" fill="none"/>
  <g stroke="#6B6B6B" stroke-width="2.3"><path d="M15.1 16.1 H28.8 M18 21.7 H28.8 M15.1 27.5 H28.8 M18 33.1 H28.8 M32 16.1 H37.3 M32 21.7 H37.3 M32 27.5 H37.3 M32 33.1 H37.3"/></g>
</svg>
<svg class="a" style="left:1650px;top:926px" width="50" height="50" viewBox="0 0 50 50">
  <rect x="12.2" y="12.4" width="27.8" height="4.8" rx="0.8" fill="#6B6B6B"/>
  <rect x="23.8" y="9.5" width="5" height="3.6" rx="1" fill="#6B6B6B"/>
  <path d="M15.1 20.6 H37.6 V41 Q37.6 42.6 36 42.6 H16.7 Q15.1 42.6 15.1 41 Z" fill="#6B6B6B"/>
</svg>
<svg class="a" style="left:1787px;top:926px" width="50" height="50" viewBox="0 0 50 50">
  <circle cx="27.5" cy="10.6" r="4.2" fill="#6B6B6B"/>
  <path d="M25.9 20.5 V30" stroke="#6B6B6B" stroke-width="5.2" stroke-linecap="round"/>
  <path d="M24.9 19.5 L18.7 25.4 L19 30.2" stroke="#6B6B6B" stroke-width="2.5" fill="none" stroke-linecap="round" stroke-linejoin="round"/>
  <path d="M32.5 22.8 L36.3 27.5" stroke="#6B6B6B" stroke-width="2.5" stroke-linecap="round"/>
  <path d="M25.5 30.5 L33.1 38.1 L33.1 44.2" stroke="#6B6B6B" stroke-width="2.7" fill="none" stroke-linecap="round" stroke-linejoin="round"/>
  <path d="M23 35 L16.2 44.5" stroke="#6B6B6B" stroke-width="2.7" stroke-linecap="round"/>
</svg>

<!-- status bar -->
<div id="status"></div>
<div class="a" style="left:240px;top:1019px;width:1680px;height:1px;background:#DDE2E8"></div>
<div class="a" style="left:245px;top:995px;width:23px;height:22px;background:linear-gradient(#F2F2F2,#ECECEC)"></div>
<svg class="a" style="left:251px;top:1007px" width="8" height="6" viewBox="0 0 8 6"><path d="M0 0.5 H8 L4 5 Z" fill="#111"/></svg>
<div class="st" style="left:284px;top:1002px;font-size:17px">Orange</div>
<div class="st" style="left:365px;top:999px">Live Rate</div>
<div class="cb" style="left:471px;top:997px"></div>
<div class="st" style="left:516px;top:998px">Fine Gold : 54669</div>
<div class="st" style="left:703px;top:998px">Fine Silver : 74277</div>
<div class="st" style="left:897px;top:998px;font-size:20.4px">Rate Date : 20-12-2022 09:05</div>
<div class="st" style="left:1188px;top:998px;font-size:20.4px;white-space:pre">Service End :  01/01/0001</div>
<div class="cb" style="left:1442px;top:997px"></div>
<div class="st" style="left:1469px;top:999px;font-size:18px">Whatsapp Open</div>

</body></html>
